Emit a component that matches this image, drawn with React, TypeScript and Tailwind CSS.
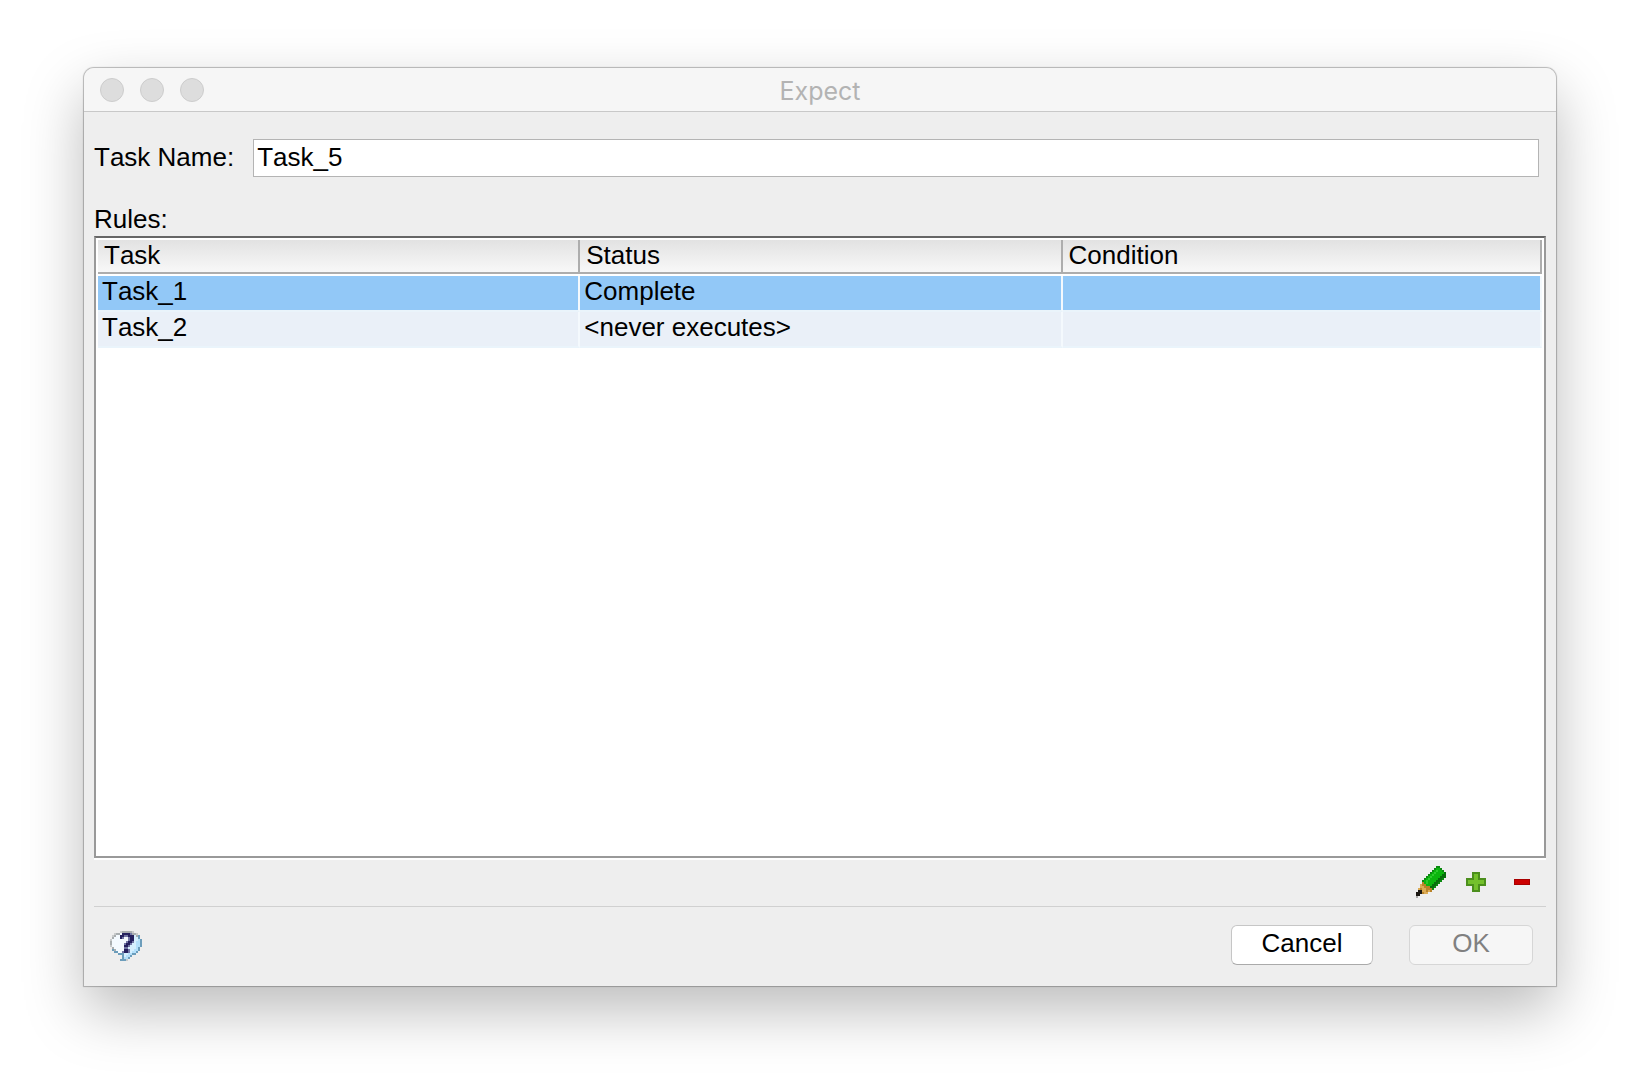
import { useState } from 'react';

type Rule = { task: string; status: string; condition: string };

const RULES: Rule[] = [
  { task: 'Task_1', status: 'Complete', condition: '' },
  { task: 'Task_2', status: '<never executes>', condition: '' },
];

const COLUMNS = ['Task', 'Status', 'Condition'];

// 16x16 bitmaps, one letter per pixel
const PENCIL = [
  '..........kk....',
  '.........kggk...',
  '........kglggk..',
  '.......kglggggd.',
  '......kglggggdd.',
  '.....kglggggddd.',
  '....kglggggddk..',
  '...kglggggddk...',
  '...yglgggddk....',
  '..wyygggddk.....',
  '..wwyyyddk......',
  '.wywwyyyk.......',
  '.bbwwywy........',
  'bbbyww..........',
  'bb..............',
  's...............',
];

const PENCIL_COLORS: Record<string, string> = {
  k: '#0b8a10',
  g: '#0bb50e',
  l: '#2ccb2c',
  d: '#066f0a',
  y: '#b98329',
  w: '#dcab55',
  b: '#1b1712',
  s: '#a8a8a8',
};

const HELP = [
  '.....ghhhhhg....',
  '..ghhwqqqqphhg..',
  '.ghwwqqppqqqlhs.',
  '.hwwwqpwwpqqlls.',
  'gwwwwwwwwpqqllcs',
  'hwwwwwwwpqqplccs',
  'hwwwwwwpqqpllccs',
  'gwwwwwwqqplllccs',
  '.hwwwwwppllllcs.',
  '.shwwwwqqpllccs.',
  '..sswwpqqplccs..',
  '....sssllccss...',
  '......slccs.....',
  '......sccs......',
  '.....sssg.......',
  '................',
];

const HELP_COLORS: Record<string, string> = {
  g: '#c9cbcc',
  h: '#a9aeb0',
  s: '#6c9dbb',
  w: '#f4faff',
  l: '#d5effe',
  c: '#b4e0fb',
  q: '#25215f',
  p: '#7377a5',
};

function Bitmap({ rows, colors }: { rows: string[]; colors: Record<string, string> }) {
  return (
    <svg viewBox="0 0 16 16" className="w-8 h-8" shapeRendering="crispEdges" aria-hidden="true">
      {rows.flatMap((row, y) =>
        [...row].map((ch, x) =>
          ch === '.' ? null : <rect key={`${x}-${y}`} x={x} y={y} width="1" height="1" fill={colors[ch]} />,
        ),
      )}
    </svg>
  );
}

function PlusIcon() {
  return (
    <svg viewBox="0 0 20 20" className="w-5 h-5" aria-hidden="true">
      <path d="M7 1h6v6h6v6h-6v6H7v-6H1V7h6z" fill="#74c12c" stroke="#4c8f1d" strokeWidth="2" />
    </svg>
  );
}

function MinusIcon() {
  return (
    <svg viewBox="0 0 16 6" className="w-4 h-1.5" aria-hidden="true">
      <path d="M0 0h16v6H0z" fill="#a80000" />
      <path d="M1 1h14v4H1z" fill="#cc0000" />
    </svg>
  );
}

export default function App() {
  const [taskName, setTaskName] = useState('Task_5');
  const [selected, setSelected] = useState(0);

  return (
    <div className="min-h-screen flex flex-col bg-white px-[84px] pt-[68px] pb-[100px] font-['Liberation_Sans',Arial,sans-serif] text-[26px] leading-[30px] text-black [font-kerning:none]">
      <div className="flex-1 flex flex-col rounded-t-[10px] bg-[#eeeeee] shadow-[0_0_1px_1px_rgba(0,0,0,0.26),0_24px_60px_0_rgba(0,0,0,0.27)]">
        <header className="h-11 grid grid-cols-[1fr_auto_1fr] items-center px-4 rounded-t-[10px] border-b border-[#c8c8c8] bg-[#f6f6f6]">
          <div className="flex gap-4">
            {['Close', 'Minimize', 'Zoom'].map(label => (
              <button key={label} aria-label={label} className="w-6 h-6 rounded-full border border-[#cdcdcd] bg-[#dddddd]" />
            ))}
          </div>
          <h1 className="pt-0.5 font-[Inter,sans-serif] text-[25px] text-[#b3b3b3]">Expect</h1>
        </header>

        <main className="flex-1 flex flex-col px-2.5 pt-[27px]">
          <div className="flex items-center gap-[19px] pr-[7px]">
            <label htmlFor="task-name" className="pb-0.5">Task Name:</label>
            <input
              id="task-name"
              value={taskName}
              onChange={e => setTaskName(e.target.value)}
              className="flex-1 min-w-0 h-[38px] px-[3px] pb-0.5 border border-[#b4b4b4] bg-white outline-none"
            />
          </div>

          <h2 id="rules-label" className="mt-[27px] mb-0.5">Rules:</h2>
          <div className="flex-1 border-2 border-[#999999] border-t-[#666666] bg-white p-0.5 shadow-[0_2px_0_#ffffff]">
            <table aria-labelledby="rules-label" className="w-full table-fixed border-separate border-spacing-0 text-left">
              <colgroup>
                <col className="w-[33.4%]" />
                <col className="w-[33.4%]" />
                <col />
              </colgroup>
              <thead>
                <tr>
                  {COLUMNS.map(col => (
                    <th key={col} className="px-1.5 pb-0.5 font-normal border-r-2 border-b-2 border-[#adadad] bg-linear-to-b from-[#e2e2e2] to-[#f8f8f8]">
                      {col}
                    </th>
                  ))}
                </tr>
                <tr aria-hidden="true"><td colSpan={3} className="h-0.5" /></tr>
              </thead>
              <tbody>
                {RULES.map((rule, i) => (
                  <tr key={rule.task} onClick={() => setSelected(i)} className={i === selected ? 'bg-[#92c8f7]' : 'bg-[#eaf0f8]'}>
                    {[rule.task, rule.status, rule.condition].map((value, c) => (
                      <td key={c} className="h-9 px-1 pb-1 border-r-2 border-b-2 border-r-[#f4f9fd] border-b-[#eaf4fb]">
                        {value}
                      </td>
                    ))}
                  </tr>
                ))}
              </tbody>
            </table>
          </div>

          <div className="flex items-center justify-end h-[49px] pr-4 border-b border-[#d0d0d0]">
            <button aria-label="Edit rule" className="mr-[18px]"><Bitmap rows={PENCIL} colors={PENCIL_COLORS} /></button>
            <button aria-label="Add rule" className="mr-7"><PlusIcon /></button>
            <button aria-label="Remove rule"><MinusIcon /></button>
          </div>

          <footer className="flex items-center justify-between h-[79px] pb-[3px] pl-4 pr-[13px]">
            <button aria-label="Help" className="pt-1"><Bitmap rows={HELP} colors={HELP_COLORS} /></button>
            <div className="flex gap-9">
              <button className="w-[142px] h-10 pb-1 rounded-md border border-[#c6c6c6] border-b-[#aaaaaa] bg-white">Cancel</button>
              <button disabled className="w-[124px] h-10 pb-1 rounded-md border border-[#d6d6d6] bg-[#f6f6f6] text-[#808080]">OK</button>
            </div>
          </footer>
        </main>
      </div>
    </div>
  );
}
